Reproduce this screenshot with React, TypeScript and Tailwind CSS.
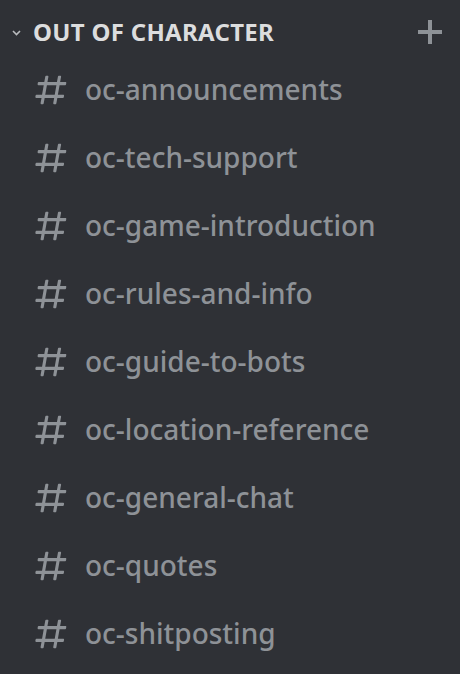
const channels = [
  'oc-announcements',
  'oc-tech-support',
  'oc-game-introduction',
  'oc-rules-and-info',
  'oc-guide-to-bots',
  'oc-location-reference',
  'oc-general-chat',
  'oc-quotes',
  'oc-shitposting',
];

function HashIcon() {
  return (
    <svg width="38" height="38" viewBox="0 0 24 24" className="shrink-0">
      <path
        fill="currentColor"
        fillRule="evenodd"
        d="M5.88657 21C5.57547 21 5.3399 20.7189 5.39427 20.4126L6.00001 17H2.59511C2.28449 17 2.04905 16.7198 2.10259 16.4138L2.27759 15.4138C2.31946 15.1746 2.52722 15 2.77011 15H6.35001L7.41001 9H4.00511C3.69449 9 3.45905 8.71977 3.51259 8.41381L3.68759 7.41381C3.72946 7.17456 3.93722 7 4.18011 7H7.76001L8.39677 3.41262C8.43914 3.17391 8.64664 3 8.88907 3H9.87344C10.1845 3 10.4201 3.28107 10.3657 3.58738L9.76001 7H15.76L16.3968 3.41262C16.4391 3.17391 16.6466 3 16.8891 3H17.8734C18.1845 3 18.4201 3.28107 18.3657 3.58738L17.76 7H21.1649C21.4755 7 21.711 7.28023 21.6574 7.58619L21.4824 8.58619C21.4406 8.82544 21.2328 9 20.9899 9H17.41L16.35 15H19.7549C20.0655 15 20.301 15.2802 20.2474 15.5862L20.0724 16.5862C20.0306 16.8254 19.8228 17 19.5799 17H16L15.3632 20.5874C15.3209 20.8261 15.1134 21 14.8709 21H13.8866C13.5755 21 13.3399 20.7189 13.3943 20.4126L14 17H8.00001L7.36325 20.5874C7.32088 20.8261 7.11337 21 6.87094 21H5.88657ZM9.41045 9L8.35045 15H14.3504L15.4104 9H9.41045Z"
      />
    </svg>
  );
}

export default function App() {
  return (
    <div className="w-[460px] h-[674px] bg-[#2f3136] pt-2 overflow-hidden font-['Noto_Sans',sans-serif]">
      <div className="h-12 flex items-center pl-[12px] pr-[18px]">
        <svg width="9" height="6" viewBox="0 0 9 6" className="text-[#b9bbbe] mr-[12px] mt-[2px]">
          <path d="M1 1l3.5 3.5L8 1" fill="none" stroke="currentColor" strokeWidth="1.6" />
        </svg>
        <span className="text-[24px] font-bold tracking-[0.3px] text-[#dcddde] leading-none">
          OUT OF CHARACTER
        </span>
        <svg width="24" height="24" viewBox="0 0 24 24" className="ml-auto text-[#8e9297]">
          <path d="M10 0h4v24h-4zM0 10h24v4H0z" fill="currentColor" />
        </svg>
      </div>
      {channels.map((c) => (
        <div key={c} className="h-[68px] flex items-center pl-[32px] text-[#8e9297]">
          <HashIcon />
          <span className="ml-[15px] text-[28px] leading-none font-medium -mt-[2px]">{c}</span>
        </div>
      ))}
    </div>
  );
}
